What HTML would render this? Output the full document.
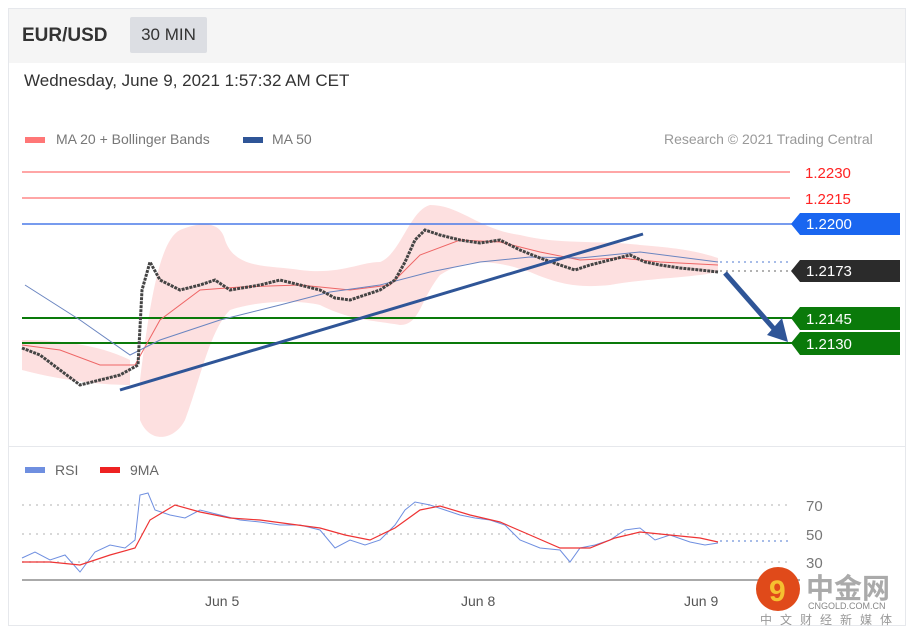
<!DOCTYPE html><html><head><meta charset="utf-8"><style>
body{margin:0;background:#fff;font-family:"Liberation Sans","Noto Sans CJK SC",sans-serif;}
.card{position:absolute;left:8px;top:8px;width:896px;height:616px;border:1px solid #e6e8ec;background:#fff;}
.hdr{position:absolute;left:0;top:0;width:896px;height:54px;background:#f5f5f5;}
</style></head><body>
<div class="card"><div class="hdr"></div></div>
<div style="position:absolute;left:22px;top:25px;font-size:19px;font-weight:bold;color:#333">EUR/USD</div>
<div style="position:absolute;left:130px;top:17px;width:77px;height:36px;background:#dcdee3;border-radius:2px;font-size:17px;color:#333;line-height:36px;text-align:center">30 MIN</div>
<div style="position:absolute;left:24px;top:71px;font-size:17px;color:#333">Wednesday, June 9, 2021 1:57:32 AM CET</div>
<div style="position:absolute;left:25px;top:137px;width:20px;height:6px;background:#f77"></div>
<div style="position:absolute;left:56px;top:131px;font-size:14px;color:#777">MA 20 + Bollinger Bands</div>
<div style="position:absolute;left:243px;top:137px;width:20px;height:6px;background:#2f5597"></div>
<div style="position:absolute;left:272px;top:131px;font-size:14px;color:#777">MA 50</div>
<div style="position:absolute;left:664px;top:131px;font-size:14px;color:#999">Research © 2021 Trading Central</div>
<div style="position:absolute;left:9px;top:446px;width:896px;border-top:1px solid #e6e8ec"></div>
<svg width="913" height="636" style="position:absolute;left:0;top:0" font-family="Liberation Sans,sans-serif">
<path d="M140,380 C150,300 160,240 180,230 C200,222 220,220 225,240 C235,270 270,265 300,270 C340,275 360,262 380,262 C400,255 410,210 430,205 C460,205 480,230 520,235 C560,245 600,240 640,245 C680,248 700,252 718,258 L718,272 C690,278 650,278 610,285 C580,288 560,285 530,272 C500,262 470,255 440,275 C420,300 420,325 400,325 C370,320 350,320 320,305 C300,300 260,300 230,310 C210,330 200,380 185,420 C175,440 150,445 140,420 Z M22,340 C60,340 100,345 130,360 L130,385 C100,385 60,380 22,370 Z" fill="#fde0e0"/>
<line x1="22" y1="172" x2="790" y2="172" stroke="#f88" stroke-width="1.5"/>
<line x1="22" y1="198" x2="790" y2="198" stroke="#f88" stroke-width="1.5"/>
<line x1="22" y1="224" x2="795" y2="224" stroke="#4a7ae8" stroke-width="1.5"/>
<line x1="22" y1="318" x2="795" y2="318" stroke="#0a7a0a" stroke-width="2"/>
<line x1="22" y1="343" x2="795" y2="343" stroke="#0a7a0a" stroke-width="2"/>
<line x1="720" y1="262" x2="790" y2="262" stroke="#8aa6e0" stroke-dasharray="2 4" stroke-width="1.5"/>
<line x1="720" y1="271" x2="790" y2="271" stroke="#999" stroke-dasharray="2 4" stroke-width="1.5"/>
<polyline fill="none" stroke="#e66" stroke-width="1" points="22,345 60,350 100,365 135,365 160,320 200,290 240,287 300,285 350,290 390,285 420,255 460,240 500,242 540,252 580,260 620,258 660,262 718,265"/>
<polyline fill="none" stroke="#6a85c0" stroke-width="1" points="25,285 80,320 130,355 160,340 220,320 280,305 330,292 380,285 430,272 480,262 530,257 580,258 640,252 718,262"/>
<polyline fill="none" stroke="#444" stroke-width="3" stroke-dasharray="3 1" points="22,348 40,355 60,370 80,385 100,380 120,375 138,365 142,290 150,262 160,280 180,290 200,285 215,280 230,290 260,285 280,280 300,285 320,290 335,298 350,300 365,295 380,290 395,280 405,262 415,240 425,230 440,235 460,240 480,243 500,240 520,250 540,258 560,265 575,270 590,265 610,260 630,255 645,262 660,265 680,268 700,270 718,272"/>
<line x1="120" y1="390" x2="643" y2="234" stroke="#2f5597" stroke-width="3"/>
<line x1="725" y1="273" x2="775" y2="330" stroke="#2f5597" stroke-width="5"/>
<polygon points="767,335 788,342 782,318" fill="#2f5597"/>
<g font-size="15"><text x="805" y="178" fill="#f22">1.2230</text><text x="805" y="204" fill="#f22">1.2215</text></g>
<polygon points="800,213 900,213 900,235 800,235 791,224" fill="#1a66f0"/>
<polygon points="800,260 900,260 900,282 800,282 791,271" fill="#2b2b2b"/>
<polygon points="800,307 900,307 900,330 800,330 791,318" fill="#0a7a0a"/>
<polygon points="800,332 900,332 900,355 800,355 791,343" fill="#0a7a0a"/>
<g font-size="15" fill="#fff"><text x="806" y="229">1.2200</text><text x="806" y="276">1.2173</text><text x="806" y="324">1.2145</text><text x="806" y="349">1.2130</text></g>
<rect x="25" y="467" width="20" height="6" fill="#6f8fe0"/><text x="55" y="475" font-size="14" fill="#666">RSI</text>
<rect x="100" y="467" width="20" height="6" fill="#e22"/><text x="130" y="475" font-size="14" fill="#666">9MA</text>
<g stroke="#ccc" stroke-dasharray="2 5" stroke-width="1.5"><line x1="22" y1="505" x2="790" y2="505"/><line x1="22" y1="534" x2="790" y2="534"/><line x1="22" y1="562" x2="790" y2="562"/></g>
<line x1="720" y1="541" x2="790" y2="541" stroke="#8aa6e0" stroke-dasharray="2 4" stroke-width="1.5"/>
<g font-size="15" fill="#777"><text x="806" y="511">70</text><text x="806" y="540">50</text><text x="806" y="568">30</text></g>
<polyline fill="none" stroke="#6f8fe0" stroke-width="1" points="22,558 35,552 50,560 65,555 80,572 95,552 110,545 125,548 135,540 140,495 148,493 155,510 170,515 185,518 200,510 220,515 240,520 260,522 280,525 300,525 320,530 335,548 350,540 365,545 380,540 395,525 405,510 415,502 430,505 445,510 460,515 475,518 490,520 505,525 520,540 540,548 560,550 570,562 580,548 595,545 610,540 625,530 640,528 655,540 670,535 690,542 705,545 718,543"/>
<polyline fill="none" stroke="#e33" stroke-width="1.2" points="22,562 50,562 80,565 110,555 135,548 150,520 175,505 200,512 230,518 260,520 290,524 320,528 345,535 370,540 395,528 420,510 440,506 470,515 500,522 530,535 560,548 590,548 615,538 640,532 670,535 700,538 718,542"/>
<line x1="22" y1="580" x2="800" y2="580" stroke="#aaa" stroke-width="2"/>
<g font-size="14" fill="#555"><text x="205" y="606">Jun 5</text><text x="461" y="606">Jun 8</text><text x="684" y="606">Jun 9</text></g>
<circle cx="778" cy="589" r="22" fill="#e04a1a"/>
<text x="769" y="601" font-size="30" font-weight="bold" fill="#f5c030">9</text>
<text x="806" y="598" font-size="28" font-weight="bold" fill="#aaa" font-family="Noto Sans CJK SC,sans-serif">中金网</text>
<text x="808" y="609" font-size="9" fill="#888">CNGOLD.COM.CN</text>
<text x="760" y="624" font-size="12" fill="#999" letter-spacing="8" font-family="Noto Sans CJK SC,sans-serif">中文财经新媒体</text>
</svg>
</body></html>
